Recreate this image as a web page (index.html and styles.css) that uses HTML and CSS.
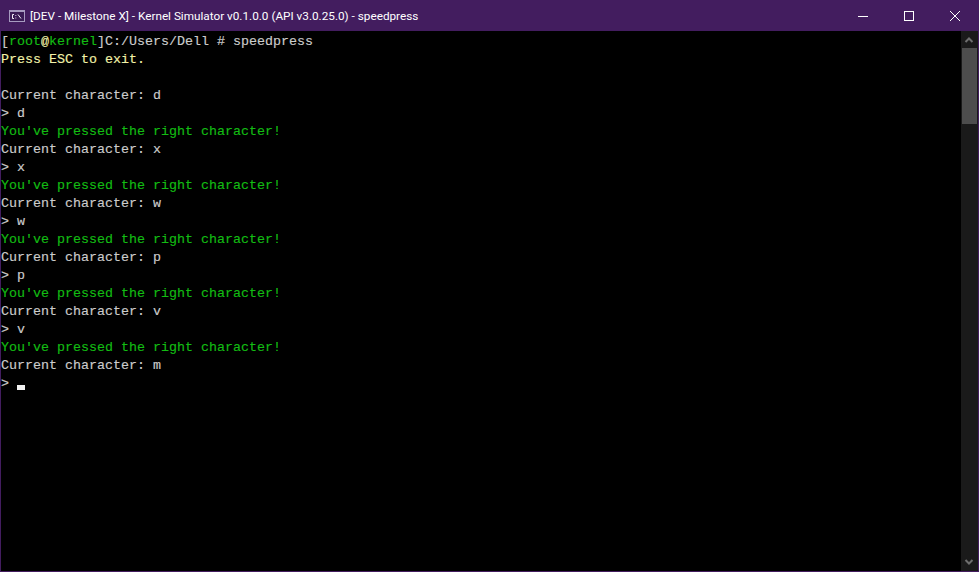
FILE: index.html
```html
<!DOCTYPE html>
<html lang="en">
<head>
<meta charset="utf-8">
<title>Kernel Simulator</title>
<link rel="stylesheet" href="styles.css">
</head>
<body>
<div class="window">
  <header class="titlebar">
    <svg class="app-icon" width="16" height="12" viewBox="0 0 16 12">
      <rect x="0" y="0" width="16" height="12" fill="#a79bc0"/>
      <rect x="1" y="2" width="14" height="9" fill="#3a1c55"/>
      <path d="M5 4.5H3.5V8.5H5M6.8 5V5.8M6.8 7.6V8.4M9 4.5L12 8.5" fill="none" stroke="#f2eef8" stroke-width="1"/>
    </svg>
    <span class="title">[DEV - Milestone X] - Kernel Simulator v0.1.0.0 (API v3.0.25.0) - speedpress</span>
    <div class="controls">
      <span class="control"><svg width="10" height="10" viewBox="0 0 10 10"><path d="M0 5.5H10" stroke="#fff" stroke-width="1"/></svg></span>
      <span class="control"><svg width="10" height="10" viewBox="0 0 10 10"><rect x="0.5" y="0.5" width="9" height="9" fill="none" stroke="#fff"/></svg></span>
      <span class="control"><svg width="10" height="10" viewBox="0 0 10 10"><path d="M0 0L10 10M10 0L0 10" stroke="#fff" stroke-width="1"/></svg></span>
    </div>
  </header>
  <div class="content">
    <main class="terminal">
      <div class="line">[<span class="green">root</span><span class="yellow">@</span><span class="green">kernel</span>]C:/Users/Dell # speedpress</div>
      <div class="line yellow">Press ESC to exit.</div>
      <div class="line"></div>
      <div class="line">Current character: d</div>
      <div class="line">&gt; d</div>
      <div class="line green">You've pressed the right character!</div>
      <div class="line">Current character: x</div>
      <div class="line">&gt; x</div>
      <div class="line green">You've pressed the right character!</div>
      <div class="line">Current character: w</div>
      <div class="line">&gt; w</div>
      <div class="line green">You've pressed the right character!</div>
      <div class="line">Current character: p</div>
      <div class="line">&gt; p</div>
      <div class="line green">You've pressed the right character!</div>
      <div class="line">Current character: v</div>
      <div class="line">&gt; v</div>
      <div class="line green">You've pressed the right character!</div>
      <div class="line">Current character: m</div>
      <div class="line">&gt; <span class="cursor"></span></div>
    </main>
    <aside class="scrollbar">
      <svg class="arrow" width="17" height="17" viewBox="0 0 17 17"><path d="M4.5 11L8 7.5L11.5 11" fill="none" stroke="#6e6e6e" stroke-width="2"/></svg>
      <div class="track"><div class="thumb"></div></div>
      <svg class="arrow" width="17" height="17" viewBox="0 0 17 17"><path d="M4.5 6L8 9.5L11.5 6" fill="none" stroke="#6e6e6e" stroke-width="2"/></svg>
    </aside>
  </div>
</div>
</body>
</html>
```
FILE: styles.css
```css
html, body {
  margin: 0;
  height: 100%;
  background: #000;
  overflow: hidden;
}
.window {
  height: 572px;
  box-sizing: border-box;
  display: flex;
  flex-direction: column;
  border: 1px solid #431d5f;
  border-top: 0;
}
.titlebar {
  height: 31px;
  flex: none;
  margin: 0 -1px;
  background: #431d5f;
  display: flex;
  align-items: center;
  padding-left: 9px;
}
.app-icon {
  flex: none;
  margin-right: 5px;
}
.title {
  flex: 1;
  color: #fff;
  font: 11.75px/16px Roboto, "Noto Sans", sans-serif;
  white-space: nowrap;
}
.controls {
  display: flex;
  flex: none;
  margin-right: 1px;
}
.control {
  width: 46px;
  height: 31px;
  display: flex;
  align-items: center;
  justify-content: center;
}
.content {
  flex: 1;
  display: flex;
  min-height: 0;
}
.terminal {
  flex: 1;
  padding-top: 2px;
  background: #000;
  color: #ccc;
  font: 13.33px/18px "Liberation Mono", monospace;
  -webkit-text-stroke: 0.15px currentColor;
  overflow: hidden;
}
.line {
  height: 18px;
  white-space: pre;
}
.green { color: #13bc13; }
.yellow { color: #f2f2a8; }
.cursor {
  display: inline-block;
  width: 8px;
  height: 5px;
  background: #f2f2f2;
  vertical-align: -3px;
}
.scrollbar {
  width: 17px;
  flex: none;
  background: #1a1a1a;
  display: flex;
  flex-direction: column;
}
.arrow { flex: none; }
.track {
  flex: 1;
  padding: 0 1px;
}
.thumb {
  height: 76px;
  background: #4d4d4d;
}
```
